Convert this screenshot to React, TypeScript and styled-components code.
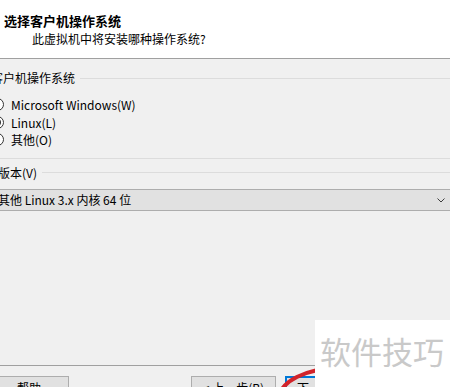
import React, { useState } from "react";
import styled, { createGlobalStyle } from "styled-components";

const FONT = `"Noto Sans CJK SC", "Noto Sans", sans-serif`;

const GlobalStyle = createGlobalStyle`
  html, body {
    margin: 0;
    padding: 0;
    background: #f0f0f0;
  }
  body {
    font-family: ${FONT};
    font-size: 12px;
    color: #000;
  }
`;

const OS_OPTIONS = [
  { id: "windows", label: "Microsoft Windows(W)" },
  { id: "linux", label: "Linux(L)" },
  { id: "other", label: "其他(O)" },
];

function App() {
  const [os, setOs] = useState("linux");

  return (
    <>
      <GlobalStyle />
      <Wizard>
        <Header>
          <Title>选择客户机操作系统</Title>
          <Subtitle>此虚拟机中将安装哪种操作系统?</Subtitle>
        </Header>

        <Body>
          <GroupBox>
            <GroupLegend indent={3}>
              <span>客户机操作系统</span>
            </GroupLegend>
            <RadioList>
              {OS_OPTIONS.map((opt) => (
                <RadioRow key={opt.id} onClick={() => setOs(opt.id)}>
                  <RadioCircle checked={os === opt.id} />
                  <span>{opt.label}</span>
                </RadioRow>
              ))}
            </RadioList>
          </GroupBox>

          <VersionGroup>
            <GroupLegend indent={10}>
              <span>版本(V)</span>
            </GroupLegend>
            <SelectBox>
              <span>其他 Linux 3.x 内核 64 位</span>
              <Chevron width="8" height="5" viewBox="0 0 8 5">
                <polyline
                  points="0.5,0.5 4,4 7.5,0.5"
                  fill="none"
                  stroke="#3c3c3c"
                  strokeWidth="1"
                />
              </Chevron>
            </SelectBox>
          </VersionGroup>
        </Body>

        <Footer>
          <WizardButton width={80} ml={-11}>
            帮助
          </WizardButton>
          <WizardButton width={85} ml={122}>
            &lt; 上一步(B)
          </WizardButton>
          <WizardButton width={86} ml={9} primary>
            下一步(N) &gt;
          </WizardButton>
        </Footer>

        <Annotation width="450" height="387" viewBox="0 0 450 387">
          <ellipse
            cx="340"
            cy="399"
            rx="61"
            ry="31"
            fill="none"
            stroke="#d2232a"
            strokeWidth="4"
          />
        </Annotation>

        <Watermark>软件技巧</Watermark>
      </Wizard>
    </>
  );
}

const Wizard = styled.div`
  position: relative;
  width: 450px;
  height: 387px;
  overflow: hidden;
  background: #f0f0f0;
`;

const Header = styled.div`
  height: 59px;
  box-sizing: border-box;
  padding-top: 13px;
  background: #fff;
  border-bottom: 1px solid #a0a0a0;
`;

const Title = styled.div`
  padding-left: 4px;
  font-size: 13px;
  font-weight: 700;
  line-height: 16px;
`;

const Subtitle = styled.div`
  margin-top: 2px;
  padding-left: 32px;
  font-size: 12px;
  line-height: 16px;
`;

const Body = styled.div`
  height: 306px;
  box-sizing: border-box;
  padding-top: 11px;
  margin-left: -12px;
`;

const GroupBox = styled.div`
  padding-bottom: 9px;
  border-bottom: 1px solid #dcdcdc;
`;

const GroupLegend = styled.div<{ indent: number }>`
  display: flex;
  align-items: center;
  gap: 5px;
  padding-left: ${({ indent }) => indent}px;
  height: 16px;
  line-height: 16px;
  white-space: nowrap;

  &::after {
    content: "";
    flex: 1;
    height: 1px;
    background: #dcdcdc;
  }
`;

const RadioList = styled.div`
  margin-top: 10px;
  display: flex;
  flex-direction: column;
`;

const RadioRow = styled.div`
  display: flex;
  align-items: center;
  gap: 7px;
  height: 17.5px;
  padding-left: 3px;
  cursor: default;
`;

const RadioCircle = styled.span<{ checked: boolean }>`
  position: relative;
  width: 13px;
  height: 13px;
  box-sizing: border-box;
  border: 1px solid #333;
  border-radius: 50%;
  background: #fff;

  &::after {
    content: "";
    display: ${({ checked }) => (checked ? "block" : "none")};
    position: absolute;
    left: 2px;
    top: 2px;
    width: 7px;
    height: 7px;
    border-radius: 50%;
    background: #333;
  }
`;

const VersionGroup = styled.div`
  margin-top: 6px;
`;

const SelectBox = styled.div`
  margin-top: 8px;
  width: 474px;
  height: 22px;
  box-sizing: border-box;
  display: flex;
  align-items: center;
  justify-content: space-between;
  padding: 0 16px 0 9px;
  background: #e1e1e1;
  border: 1px solid #adadad;
  white-space: nowrap;
`;

const Chevron = styled.svg`
  display: block;
  margin-top: 2px;
`;

const Footer = styled.div`
  display: flex;
  align-items: flex-start;
  padding-top: 10px;
  border-top: 1px solid #a0a0a0;
`;

const WizardButton = styled.button<{ width: number; ml: number; primary?: boolean }>`
  flex-shrink: 0;
  width: ${({ width }) => width}px;
  height: 23px;
  margin-left: ${({ ml }) => ml}px;
  padding: 0;
  font-family: ${FONT};
  font-size: 12px;
  color: #000;
  background: #e1e1e1;
  border: ${({ primary }) => (primary ? "2px solid #0078d7" : "1px solid #adadad")};
  white-space: nowrap;
`;

const Annotation = styled.svg`
  position: absolute;
  left: 0;
  top: 0;
  pointer-events: none;
`;

const Watermark = styled.div`
  position: absolute;
  left: 315px;
  top: 320px;
  width: 135px;
  height: 67px;
  box-sizing: border-box;
  padding: 15px 0 0 5px;
  background: #fff;
  font-family: ${FONT};
  font-size: 31px;
  line-height: 31px;
  color: #c9c9c9;
  white-space: nowrap;
`;

export default App;
